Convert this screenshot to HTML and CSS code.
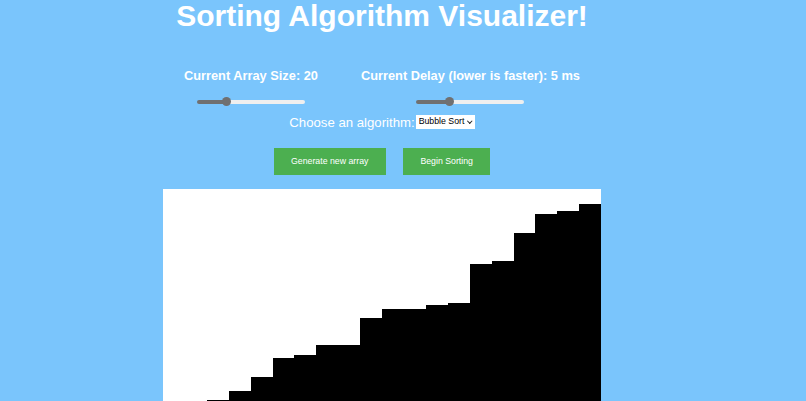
FILE: index.html
```html
<!doctype html>
<html lang="en">
<head>
  <meta charset="UTF-8" />
  <meta name="viewport" content="width=device-width, initial-scale=1.0" />
  <title>Sorting Algorithm Visualizer</title>
  <link rel="stylesheet" href="styles.css">
</head>
<body>
  <main class="app">
    <h1>Sorting Algorithm Visualizer!</h1>

    <section class="controls">
      <div class="control">
        <label for="sizeSlider">Current Array Size: <span id="sizeValue">20</span></label>
        <input class="slider" type="range" id="sizeSlider" min="10" max="50" value="20" />
      </div>
      <div class="control">
        <label for="delaySlider">Current Delay (lower is faster): <span id="delayValue">5</span> ms</label>
        <input class="slider" type="range" id="delaySlider" min="1" max="15" value="5" />
      </div>
    </section>

    <div class="picker">
      <label for="algorithm">Choose an algorithm:</label>
      <span class="select-wrap">
        <select id="algorithm">
          <option>Bubble Sort</option>
          <option>Insertion Sort</option>
          <option>Selection Sort</option>
          <option>Merge Sort</option>
          <option>Quick Sort</option>
        </select>
      </span>
    </div>

    <div class="actions">
      <button id="generateBtn">Generate new array</button>
      <button id="sortBtn">Begin Sorting</button>
    </div>

    <section class="bars" id="bars"></section>
  </main>

  <script src="script.js"></script>
</body>
</html>
```

FILE: styles.css
```css
:root {
  --sky: #7ac5fc;
  --green: #4caf50;
  --track: #efefef;
  --knob: #707070;
}

* { box-sizing: border-box; }

body {
  margin: 0;
  background: var(--sky);
  color: white;
  font-family: "Liberation Sans", Arial, sans-serif;
}

.app {
  width: 764px;
  padding-bottom: 8px;
  text-align: center;
}

h1 {
  margin: 1px 0 0;
  font-size: 30px;
  line-height: 30px;
}

.controls {
  display: flex;
  justify-content: center;
  gap: 43px;
  margin-top: 37px;
}

.control {
  display: flex;
  flex-direction: column;
  align-items: center;
}

.control label {
  font-size: 0.8em;
  font-weight: bold;
}

.slider {
  -webkit-appearance: none;
  appearance: none;
  width: 108px;
  height: 9px;
  margin: 14px 0 0;
  background: transparent;
}

.slider::-webkit-slider-runnable-track {
  height: 4px;
  border-radius: 2px;
  background: linear-gradient(to right, var(--knob) var(--fill, 0%), var(--track) var(--fill, 0%));
}

.slider::-webkit-slider-thumb {
  -webkit-appearance: none;
  width: 9px;
  height: 9px;
  margin-top: -2.5px;
  border-radius: 50%;
  background: var(--knob);
}

.picker {
  display: flex;
  justify-content: center;
  align-items: center;
  gap: 1px;
  margin-top: 8.5px;
  font-size: 13.2px;
}

.select-wrap {
  position: relative;
  display: block;
}

/* small chevron in place of the native arrow */
.select-wrap::after {
  content: "";
  position: absolute;
  right: 3px;
  top: 4px;
  width: 2.5px;
  height: 2.5px;
  border-right: 1.2px solid #222;
  border-bottom: 1.2px solid #222;
  transform: rotate(45deg);
  pointer-events: none;
}

select {
  -webkit-appearance: none;
  appearance: none;
  display: block;
  width: 59px;
  height: 13.5px;
  padding: 0 6px 0 3px;
  border: 0;
  border-radius: 0;
  background: white;
  color: black;
  font-family: inherit;
  font-size: 8.75px;
  line-height: 13.5px;
}

.actions {
  display: flex;
  justify-content: center;
  gap: 17px;
  margin-top: 18px;
}

button {
  border: 0;
  background: var(--green);
  color: white;
  font-family: inherit;
  font-size: 8.75px;
  line-height: 10px;
  padding: 8.5px 17.5px;
  cursor: pointer;
}

.bars {
  display: flex;
  align-items: flex-end;
  width: 438px;
  height: 291px;
  margin: 14px auto 0;
  background: white;
}

.bar {
  flex: 1;
  background: black;
}
```

FILE: script.js
```js
const heights = [50, 65, 80, 89, 103, 122, 125, 135, 135, 162, 171, 171, 175, 177, 216, 219, 247, 266, 269, 276];

const bars = document.getElementById("bars");

function drawBars() {
  bars.innerHTML = "";
  heights.forEach(h => {
    const bar = document.createElement("div");
    bar.className = "bar";
    bar.style.height = h + "px";
    bars.appendChild(bar);
  });
}

// fill the track up to the middle of the thumb
function paintSlider(input) {
  const f = (input.value - input.min) / (input.max - input.min);
  const w = input.offsetWidth;
  const pct = (4.5 + f * (w - 9)) / w * 100;
  input.style.setProperty("--fill", pct + "%");
}

const sizeSlider = document.getElementById("sizeSlider");
const delaySlider = document.getElementById("delaySlider");

sizeSlider.addEventListener("input", () => {
  document.getElementById("sizeValue").textContent = sizeSlider.value;
  paintSlider(sizeSlider);
});

delaySlider.addEventListener("input", () => {
  document.getElementById("delayValue").textContent = delaySlider.value;
  paintSlider(delaySlider);
});

paintSlider(sizeSlider);
paintSlider(delaySlider);
drawBars();
```
